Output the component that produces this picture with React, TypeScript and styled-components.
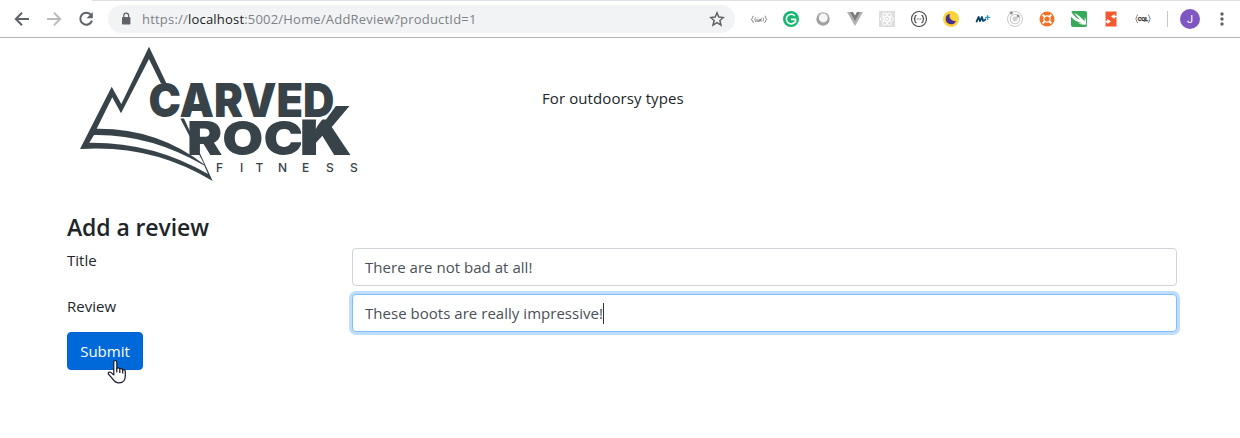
import React from "react";
import styled, { createGlobalStyle, css } from "styled-components";

const GlobalStyle = createGlobalStyle`
  *, *::before, *::after { box-sizing: border-box; }
  body {
    margin: 0;
    min-height: 100vh;
    background: #fff;
    color: #212529;
    font-family: "Open Sans", "Noto Sans", sans-serif;
    font-size: 15px;
    line-height: 24px;
  }
`;

const Toolbar = styled.header`
  display: flex;
  align-items: center;
  height: 38px;
  padding: 1px 9px 0 14px;
  border-bottom: 1px solid #b1b3b5;
  background: linear-gradient(#dee1e6, #dee1e6) 92px 0 / 100% 1px no-repeat #fff;
`;

const NavButtons = styled.nav`
  display: flex;
  gap: 16px;
  width: 94px;
`;

const AddressBar = styled.div`
  display: flex;
  align-items: center;
  width: 627px;
  height: 28px;
  padding: 0 10px 0 12px;
  border-radius: 14px;
  background: #f1f3f4;
`;

const Url = styled.span`
  flex: 1;
  margin-left: 10px;
  color: #7d8287;
  font-size: 13px;
  letter-spacing: 0.2px;
  white-space: nowrap;
`;

const Host = styled.span`
  color: #202124;
`;

const Extensions = styled.div`
  display: flex;
  gap: 14px;
  margin-left: 15px;
`;

const Divider = styled.i`
  width: 1px;
  height: 16px;
  margin: 0 12px 0 15px;
  background: #c6c8ca;
`;

const Avatar = styled.span`
  display: grid;
  place-items: center;
  width: 20px;
  height: 20px;
  border-radius: 50%;
  background: #7e57c2;
  color: #fff;
  font: 11px Roboto, sans-serif;
`;

const MenuDots = styled.svg`
  margin-left: 14px;
`;

const Page = styled.main`
  width: 1140px;
  margin: 0 auto 0 52px;
  padding: 0 15px;
`;

const Banner = styled.div`
  display: flex;
  height: 173px;
`;

const Logo = styled.svg`
  display: block;
  flex: none;
  margin-left: 3px;
`;

const Tagline = styled.p`
  margin: 48px 0 0 172px;
  letter-spacing: 0.1px;
`;

const Heading = styled.h3`
  margin: 0 0 5px;
  font-size: 23px;
  font-weight: 600;
  line-height: 32px;
  letter-spacing: -0.1px;
`;

const FormRow = styled.div`
  display: grid;
  grid-template-columns: 285px 825px;
  height: 38px;
  margin-bottom: 8px;
`;

const Label = styled.label`
  letter-spacing: 0;
`;

const Field = styled.div<{ $focused?: boolean }>`
  display: flex;
  align-items: center;
  height: 38px;
  padding: 0 12px;
  border: 1px solid #ced4da;
  border-radius: 4px;
  background: #fff;
  color: #495057;
  letter-spacing: 0.03px;
  white-space: nowrap;
  ${(p) =>
    p.$focused &&
    css`
      border-color: #80bdff;
      box-shadow: 0 0 0 3px #bfdeff;
    `}
`;

const Caret = styled.i`
  width: 1px;
  height: 21px;
  background: #30363c;
`;

const Actions = styled.div`
  position: relative;
  margin-top: -8px;
  width: 76px;
`;

const SubmitButton = styled.button`
  display: block;
  width: 76px;
  height: 38px;
  padding: 0;
  border: 1px solid #0062cc;
  border-radius: 4px;
  background: #0069d9;
  color: #fff;
  font: inherit;
`;

const Pointer = styled.svg`
  position: absolute;
  left: 40px;
  top: 27px;
`;

function BackIcon() {
  return (
    <svg width="16" height="16" viewBox="0 0 16 16" fill="none" stroke="#5f6368" strokeWidth="2">
      <path d="M15 8H2M8 1.7 1.8 8 8 14.3" />
    </svg>
  );
}

function ForwardIcon() {
  return (
    <svg width="16" height="16" viewBox="0 0 16 16" fill="none" stroke="#babcbe" strokeWidth="2">
      <path d="M1 8h13M8 1.7 14.2 8 8 14.3" />
    </svg>
  );
}

function ReloadIcon() {
  return (
    <svg width="16" height="16" viewBox="0 0 16 16" fill="none">
      <path d="M12.7 3.6A6 6 0 1 0 14 9.6" stroke="#5f6368" strokeWidth="2" />
      <path d="M14.8 1v6.2H8.6z" fill="#5f6368" />
    </svg>
  );
}

function LockIcon() {
  return (
    <svg width="12" height="14" viewBox="0 0 12 14">
      <rect x="2" y="5" width="8.4" height="7.6" rx="0.8" fill="#5f6368" />
      <path d="M3.8 5.3V3.6a2.4 2.4 0 0 1 4.8 0v1.7" fill="none" stroke="#5f6368" strokeWidth="1.2" />
    </svg>
  );
}

function StarIcon() {
  return (
    <svg width="16" height="16" viewBox="0 0 16 16">
      <path
        d="M8 1.8l1.8 4.3 4.6.4-3.5 3 1.1 4.6-4-2.5-4 2.5 1.1-4.6-3.5-3 4.6-.4z"
        fill="none"
        stroke="#5f6368"
        strokeWidth="1.5"
      />
    </svg>
  );
}

const tile = { width: 18, height: 18, viewBox: "0 0 18 18" };

function ExtensionIcons() {
  return (
    <Extensions>
      <svg {...tile} fill="none" stroke="#858585">
        <path d="M3.6 6.2C1.7 5.8 3.2 9 1.2 9.6c2 .2.7 3 2.8 2.8M14.3 12.5c2 .2.8-2.8 2.5-3.2-1.8-.6-.1-3.6-2.2-3.3M5.5 7.5c-.8 1.2-.7 3.3.2 4.3M13 7.4c.8 1.2.7 3.2-.2 4.3" />
        <path d="M7 9v2.2h2V9.3M9 11.2l2-2v2.3M7.6 7.8h.8" strokeWidth="1.1" />
      </svg>
      <svg {...tile}>
        <circle cx="9" cy="9" r="8" fill="#15b66f" />
        <path d="M12.8 5.9A4.8 4.8 0 1 0 13 12M9 9.4h4.5v3.4" fill="none" stroke="#fff" strokeWidth="1.6" />
      </svg>
      <svg {...tile}>
        <circle cx="9" cy="9" r="6.7" fill="#a2a2a2" />
        <path d="M4 4.6q0-1.6 1.6-1.6h7q1.6 0 1.6 1.6v2H4z" fill="#b5b5b5" />
        <circle cx="9.3" cy="8" r="4.4" fill="#f7f7f7" />
      </svg>
      <svg {...tile}>
        <path d="M1 2h4l4 7 4-7h4L9 16z" fill="#b1b1b1" />
        <path d="M4 2h3l2 3.6L11 2h3L9 11z" fill="#7c7c7c" />
      </svg>
      <svg {...tile}>
        <path fill="#dedede" d="M1 1h16v16H1z" />
        <g fill="none" stroke="#fff" strokeWidth="0.9">
          <ellipse cx="9" cy="9" rx="6.7" ry="2.6" />
          <ellipse cx="9" cy="9" rx="6.7" ry="2.6" transform="rotate(60 9 9)" />
          <ellipse cx="9" cy="9" rx="6.7" ry="2.6" transform="rotate(120 9 9)" />
        </g>
        <circle cx="9" cy="9" r="1.3" fill="#fff" />
      </svg>
      <svg {...tile} fill="none" stroke="#454545">
        <circle cx="9" cy="9" r="7.5" strokeWidth="1.1" />
        <path d="M6.5 5.4Q5 5.4 5 7t-1.1 2Q5 9 5 11t1.5 1.6M11.5 5.4Q13 5.4 13 7t1.1 2Q13 9 13 11t-1.5 1.6" strokeWidth="1.2" />
        <path d="M6.7 9h4.7" strokeDasharray="1 .8" strokeWidth="1.1" />
      </svg>
      <svg {...tile}>
        <circle cx="9" cy="9" r="8" fill="#fbd23c" />
        <path d="M8 3.8a5.3 5.3 0 1 0 6 6.9A5 5 0 0 1 8 3.8" fill="#46308d" />
      </svg>
      <svg {...tile} fill="none" stroke="#0b4366" strokeLinecap="round" strokeLinejoin="round">
        <path d="M2.6 11.5 4.7 7l1.3 4.2L8 7l1.1 4q1.6-.4 2.3-1.6" strokeWidth="1.8" />
        <path d="M13.6 5.6v3.6M11.8 7.4h3.6" stroke="#279bd0" strokeWidth="1.4" />
      </svg>
      <svg {...tile}>
        <g fill="none" stroke="#c9c9c9">
          <circle cx="9" cy="9" r="7.5" strokeWidth="1" />
          <circle cx="9" cy="9" r="4.7" strokeWidth="1.1" />
        </g>
        <circle cx="9" cy="9" r="2.4" fill="#cdcdcd" />
        <circle cx="5.2" cy="2.8" r="1.6" fill="#8e8e8e" />
        <circle cx="12.1" cy="6" r="1.5" fill="#929292" />
      </svg>
      <svg {...tile}>
        <circle cx="9" cy="9" r="7.5" fill="#f57225" />
        <circle cx="9" cy="9" r="3.1" fill="none" stroke="#fff" strokeWidth="1.1" />
        <path d="m4.6 4.6 2.4 2.4m6.4-2.4-2.4 2.4m-6.4 6.4 2.4-2.4m6.4 2.4-2.4-2.4" stroke="#fff" strokeWidth="2" />
        <circle cx="9" cy="9" r="1.9" fill="#f57225" />
      </svg>
      <svg {...tile}>
        <rect x="1" y="1" width="16" height="16" rx="2" fill="#38a85b" />
        <path d="M1 1.4q3.7 6 9 8.4Q6 5.8 4.3 3q4.6 2 10.4 8.3V6.8q1.8 3 1.5 7.7Q12 15 8 13.6l3.8-.3Q4.6 11.3 1 6.8z" fill="#fff" />
      </svg>
      <svg {...tile}>
        <path d="M3.5 1.5h11v15h-11z" fill="#f4582e" />
        <path d="M14.7 5.7h-2V4L9 6.5l3.7 2.5V7.3h2zM3.3 10.7h2V9.1L9 11.6l-3.7 2.5v-1.7h-2z" fill="#fff" />
      </svg>
      <svg {...tile}>
        <g fill="none" stroke="#777" strokeWidth="0.9">
          <path d="M4 4.9q-1.3 0-1.3 1.7T1.5 9q1.2.3 1.2 2T4 12.8M14 4.9q1.3 0 1.3 1.7T16.5 9q-1.2.3-1.2 2T14 12.8" />
        </g>
        <text x="3.7" y="11.2" fill="#333" stroke="#333" strokeWidth=".25" fontFamily="Roboto, sans-serif" fontSize="5.7" fontWeight="700" textLength="10.5">
          CQL
        </text>
      </svg>
    </Extensions>
  );
}

const LogoWord = styled.text`
  fill: #374249;
  stroke: #fff;
  stroke-width: 2px;
  paint-order: stroke;
  font-family: Inter, Roboto, sans-serif;
  font-weight: 900;
`;

function CarvedRockLogo() {
  return (
    <Logo width="300" height="150" viewBox="70 38 300 150" role="img" aria-label="Carved Rock Fitness">
      <LogoWord x="148.5" y="117.2" fontSize="46.8" textLength="186" lengthAdjust="spacingAndGlyphs">
        CARVED
      </LogoWord>
      <LogoWord x="187" y="154.5" fontSize="46.8" textLength="116" lengthAdjust="spacingAndGlyphs">
        ROC
      </LogoWord>
      <clipPath id="arm">
        <path d="M296 119.5h30l11-15h17v52h-58z" />
      </clipPath>
      <LogoWord x="299" y="154.5" fontSize="68" textLength="53" lengthAdjust="spacingAndGlyphs" clipPath="url(#arm)">
        K
      </LogoWord>
      <path
        fill="#374249"
        fillRule="evenodd"
        d="M80 149 111.7 86.7 121.3 104 149 46.7 166.5 83.5H161L149 59 121 113.3 112.3 97.3 96.7 128.7Q157 128 204.3 164.5L180.3 118.5H184L212.7 181Q152 144 80 149M94 135 89.3 142.7Q153 142 208 174L204.3 165.6Q150 134 94 135"
      />
      <text y="172" x="216 240 255.5 278 302 326 350" fill="#374249" fontFamily="Inter, sans-serif" fontSize="12" fontWeight="500">
        FITNESS
      </text>
    </Logo>
  );
}

function HandPointer() {
  return (
    <Pointer width="20" height="26" viewBox="0 0 20 26">
      <path
        d="M6.8 16.2V3.2q0-1.7 1.5-1.7t1.5 1.7v6q2-1 3 .6 2-.7 2.8.8 2.7-.4 2.7 2v4.2q0 7-6.3 7-3.8 0-6-3.4L1.3 15q-.3-1.8 1.3-2 1.5 0 4.2 3.2"
        fill="#fff"
        stroke="#15172b"
        strokeWidth="1.2"
      />
      <path d="M9.8 9v4.5m3-3.5v4m2.9-3v3.5" stroke="#15172b" strokeWidth="1.2" />
    </Pointer>
  );
}

export default function App() {
  return (
    <>
      <GlobalStyle />
      <Toolbar>
        <NavButtons>
          <BackIcon />
          <ForwardIcon />
          <ReloadIcon />
        </NavButtons>
        <AddressBar>
          <LockIcon />
          <Url>
            https://<Host>localhost</Host>:5002/Home/AddReview?productId=1
          </Url>
          <StarIcon />
        </AddressBar>
        <ExtensionIcons />
        <Divider />
        <Avatar>J</Avatar>
        <MenuDots width="16" height="16" viewBox="0 0 16 16" fill="#5f6368">
          <circle cx="8" cy="3" r="1.7" />
          <circle cx="8" cy="8" r="1.7" />
          <circle cx="8" cy="13" r="1.7" />
        </MenuDots>
      </Toolbar>
      <Page>
        <Banner>
          <CarvedRockLogo />
          <Tagline>For outdoorsy types</Tagline>
        </Banner>
        <Heading>Add a review</Heading>
        <FormRow>
          <Label>Title</Label>
          <Field>There are not bad at all!</Field>
        </FormRow>
        <FormRow>
          <Label>Review</Label>
          <Field $focused>
            These boots are really impressive!
            <Caret />
          </Field>
        </FormRow>
        <Actions>
          <SubmitButton>Submit</SubmitButton>
          <HandPointer />
        </Actions>
      </Page>
    </>
  );
}
